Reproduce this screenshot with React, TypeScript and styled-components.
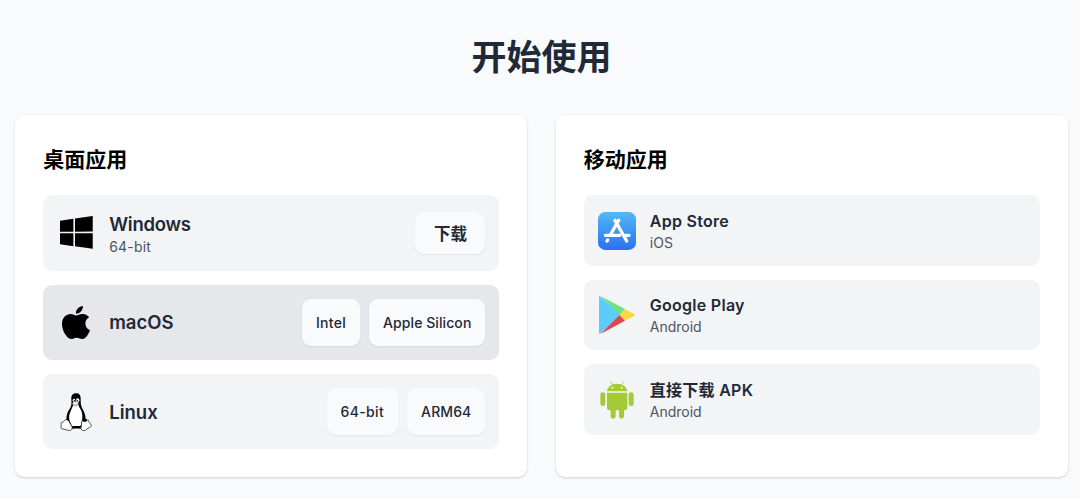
import React, { FunctionComponent, ReactNode } from 'react';
import styled, { createGlobalStyle } from 'styled-components';

const GlobalStyle = createGlobalStyle`
  * {
    box-sizing: border-box;
  }

  body {
    margin: 0;
    background-color: #f9fafb;
    color: #1f2937;
    font-family: Inter, 'Noto Sans CJK SC', sans-serif;
  }
`;

const Page = styled.main`
  padding: 30.5px 12px 20px 15.2px;
`;

const PageTitle = styled.h1`
  margin: 0 0 32.8px;
  font-size: 35px;
  line-height: 52px;
  font-weight: 700;
  text-align: center;
`;

const Columns = styled.div`
  display: grid;
  grid-template-columns: 1fr 1fr;
  gap: 28.4px;
`;

const Card = styled.section`
  height: 361.5px;
  padding: 28px;
  border-radius: 9px;
  background-color: white;
  box-shadow: 0 1px 3px rgba(0, 0, 0, 0.1), 0 1px 2px rgba(0, 0, 0, 0.08);
`;

const CardTitle = styled.h2`
  margin: 0 0 19px;
  padding-top: 1px;
  font-size: 21px;
  line-height: 32px;
  font-weight: 700;
  color: black;
`;

const List = styled.div`
  display: flex;
  flex-direction: column;
  gap: 14px;
`;

const Row = styled.div<{ $active?: boolean; $height: number }>`
  display: flex;
  align-items: center;
  height: ${({ $height }) => $height}px;
  padding: 0 14px;
  border-radius: 9px;
  background-color: ${({ $active }) => ($active ? '#e5e7eb' : '#f3f4f6')};
`;

const IconBox = styled.div`
  display: flex;
  justify-content: center;
  align-items: center;
  flex: none;
  width: 38px;
  height: 40px;
  margin-right: 14px;

  svg {
    display: block;
  }
`;

const Name = styled.div<{ $size: number; $spacing?: number }>`
  font-size: ${({ $size }) => $size}px;
  line-height: 24px;
  font-weight: 600;
  letter-spacing: ${({ $spacing = 0 }) => $spacing}px;
`;

const Detail = styled.div<{ $spacing?: number }>`
  font-size: 14px;
  line-height: 20px;
  letter-spacing: ${({ $spacing = 0 }) => $spacing}px;
  color: #4b5563;
`;

const Label = styled.div`
  padding-top: 3px;

  ${Detail} {
    margin-top: 1px;
  }
`;

const Actions = styled.div`
  display: flex;
  gap: 9px;
  margin-left: auto;
`;

const Button = styled.button<{ $large?: boolean; $spacing?: number }>`
  height: ${({ $large }) => ($large ? 42 : 47)}px;
  padding: 0 ${({ $large }) => ($large ? 18.5 : 14)}px;
  border: 0;
  border-radius: 9px;
  background-color: #f9fafb;
  box-shadow: 0 1px 2px rgba(0, 0, 0, 0.07);
  color: #1f2937;
  font-family: inherit;
  font-size: ${({ $large }) => ($large ? 16.5 : 14)}px;
  font-weight: ${({ $large }) => ($large ? 700 : 500)};
  letter-spacing: ${({ $spacing = 0 }) => $spacing}px;
  white-space: nowrap;
`;

const WindowsIcon = () => (
  <svg width="33" height="33" viewBox="0 0 88 88">
    <path d="m0,12.402,35.687-4.8602,.0156,34.423-35.67,.20313zm35.67,33.529,.0277,34.453-35.67-4.9041-.002-29.78zm4.326-39.025,47.318-6.906,0,41.527-47.318,.37565zm47.329,39.349-.0111,41.34-47.318-6.6784-.0663-34.739z" />
  </svg>
);

const AppleIcon = () => (
  <svg width="28" height="33" viewBox="0 0 814 1000" preserveAspectRatio="none">
    <path d="M788.1 340.9c-5.8 4.5-108.2 62.2-108.2 190.5 0 148.4 130.3 200.9 134.2 202.2-.6 3.2-20.7 71.9-68.7 141.9-42.8 61.6-87.5 123.1-155.5 123.1s-85.5-39.5-164-39.5c-76.5 0-103.7 40.8-165.9 40.8s-105.6-57-155.5-127C46.7 790.7 0 663 0 541.8c0-194.4 126.4-297.5 250.8-297.5 66.1 0 121.2 43.4 162.7 43.4 39.5 0 101.1-46 176.3-46 28.5 0 130.9 2.6 198.3 99.2zm-234-181.5c31.1-36.9 53.1-88.1 53.1-139.3 0-7.1-.6-14.3-1.9-20.1-50.6 1.9-110.8 33.7-147.1 75.8-28.5 32.4-55.1 83.6-55.1 135.5 0 7.8 1.3 15.6 1.9 18.1 3.2.6 8.4 1.3 13.6 1.3 45.4 0 102.5-30.4 135.4-71.3z" />
  </svg>
);

const LinuxIcon = () => (
  <svg width="32" height="40" viewBox="0 0 96 120">
    <path d="M49 4C37 4 33 12 34 23c1 12 1 18-6 29-6 9-9 19-9 31l14 22c8 5 22 5 31 0l12-20c2-10-1-21-7-32-6-10-7-16-7-28C63 11 59 4 49 4z" />
    <path d="M40 39c-4 8-6 15-10 23-5 11-3 24 3 33 1 5 3 8 7 9 8 3 17 1 23-4 3-7 3-15 4-22 1-14-3-24-9-32-2-4-3-8-5-12-4 4-9 5-13 5z" fill="white" />
    <ellipse cx="42" cy="25" rx="4" ry="5" fill="white" />
    <ellipse cx="53" cy="25" rx="5" ry="6" fill="white" />
    <circle cx="43" cy="26" r="2" />
    <circle cx="52" cy="26" r="2" />
    <path d="M37 33c5-6 13-6 20-1-1 6-8 10-13 10-4 0-8-5-7-9z" fill="white" stroke="black" strokeWidth="1" />
    <path d="M38 35c7 4 12 2 18-2" fill="none" stroke="black" strokeWidth="1" />
    <path d="M20 83c6 0 9 10 14 17 6 10 1 17-9 15L5 110c-4-2 0-9-2-15 0-5 7-4 10-8 2-3 4-4 7-4z" fill="white" stroke="black" strokeWidth="2" />
    <path d="M66 85c3-5 4 3 12 2 4 0 6-6 8 0 2 7 8 10 8 15-3 4-10 6-14 10-7 7-17 4-17-4 1-8 2-15 3-23z" fill="white" stroke="black" strokeWidth="2" />
    <path d="M67 80c5-3 11-1 15 4-5 7-11 7-15 2z" />
    <path d="M37 103c8-1 18-1 25 0v7c-8-2-16-2-25 0z" />
  </svg>
);

const AppStoreIcon = () => (
  <svg width="38" height="38" viewBox="0 0 114 114">
    <defs>
      <linearGradient id="storeBlue" x1="0" y1="0" x2="0" y2="1">
        <stop offset="0" stopColor="#51b9f5" />
        <stop offset="1" stopColor="#2c70ee" />
      </linearGradient>
    </defs>
    <rect width="114" height="114" rx="22" fill="url(#storeBlue)" />
    <g stroke="white" strokeWidth="10" strokeLinecap="round">
      <path d="M62 25 37 69M29 84l-2 3M51 25l35 62M22 70h43M83 70h10" />
    </g>
  </svg>
);

const PlayIcon = () => (
  <svg width="36" height="38" viewBox="0 0 108 114">
    <path d="M2 3v108l61-55z" fill="#5bcdf8" stroke="#5bcdf8" strokeWidth="4" strokeLinejoin="round" />
    <path d="M4 0 78 39 62 57z" fill="#6ce383" />
    <path d="M4 114 62 57l16 17z" fill="#e0444f" />
    <path d="m78 39 26 14q5 4 0 8L78 74 62 57z" fill="#fad847" />
  </svg>
);

const AndroidIcon = () => (
  <svg width="34" height="38" viewBox="0 0 102 114" fill="#a4ca39">
    <path d="M21 31C22 18 34 8 51 8s30 10 31 23z" />
    <path d="m32 2 8 12M71 2l-8 12" stroke="#a4ca39" strokeWidth="2.5" strokeLinecap="round" />
    <path d="M21 35h61v46a7 7 0 0 1-7 7H28a7 7 0 0 1-7-7z" />
    <rect x="1" y="34" width="15" height="41" rx="7.5" />
    <rect x="86" y="34" width="15" height="41" rx="7.5" />
    <rect x="32" y="72" width="15" height="41" rx="7" />
    <rect x="57" y="72" width="15" height="41" rx="7" />
    <circle cx="37" cy="20" r="2.8" fill="white" />
    <circle cx="65" cy="20" r="2.8" fill="white" />
  </svg>
);

interface MobileRowProps {
  icon: ReactNode;
  name: string;
  detail: string;
}

const MobileRow: FunctionComponent<MobileRowProps> = ({ icon, name, detail }) => (
  <Row $height={70.5}>
    <IconBox>{icon}</IconBox>
    <div>
      <Name $size={16} $spacing={0.27}>
        {name}
      </Name>
      <Detail>{detail}</Detail>
    </div>
  </Row>
);

const App: FunctionComponent = () => {
  return (
    <>
      <GlobalStyle />
      <Page>
        <PageTitle>开始使用</PageTitle>
        <Columns>
          <Card>
            <CardTitle>桌面应用</CardTitle>
            <List>
              <Row $height={75.3}>
                <IconBox>
                  <WindowsIcon />
                </IconBox>
                <Label>
                  <Name $size={18.5} $spacing={-0.25}>
                    Windows
                  </Name>
                  <Detail $spacing={0.2}>64-bit</Detail>
                </Label>
                <Actions>
                  <Button $large>下载</Button>
                </Actions>
              </Row>
              <Row $height={75.3} $active>
                <IconBox>
                  <AppleIcon />
                </IconBox>
                <Name $size={18.5}>macOS</Name>
                <Actions>
                  <Button $spacing={0.3}>Intel</Button>
                  <Button $spacing={0.08}>Apple Silicon</Button>
                </Actions>
              </Row>
              <Row $height={75.3}>
                <IconBox>
                  <LinuxIcon />
                </IconBox>
                <Name $size={18.5}>Linux</Name>
                <Actions>
                  <Button $spacing={0.35}>64-bit</Button>
                  <Button $spacing={0.1}>ARM64</Button>
                </Actions>
              </Row>
            </List>
          </Card>
          <Card>
            <CardTitle>移动应用</CardTitle>
            <List>
              <MobileRow icon={<AppStoreIcon />} name="App Store" detail="iOS" />
              <MobileRow icon={<PlayIcon />} name="Google Play" detail="Android" />
              <MobileRow icon={<AndroidIcon />} name="直接下载 APK" detail="Android" />
            </List>
          </Card>
        </Columns>
      </Page>
    </>
  );
};

export default App;
